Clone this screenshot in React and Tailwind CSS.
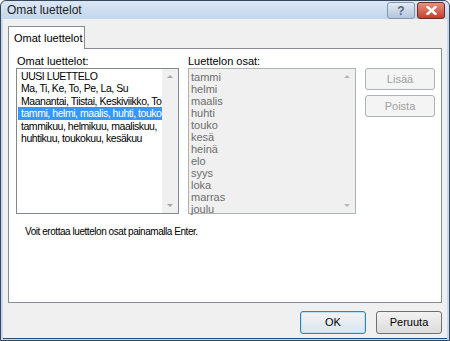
const lists = [
  "UUSI LUETTELO",
  "Ma, Ti, Ke, To, Pe, La, Su",
  "Maanantai, Tiistai, Keskiviikko, To",
  "tammi, helmi, maalis, huhti, touko",
  "tammikuu, helmikuu, maaliskuu,",
  "huhtikuu, toukokuu, kesäkuu",
];

const parts = ["tammi", "helmi", "maalis", "huhti", "touko", "kesä", "heinä", "elo", "syys", "loka", "marras", "joulu"];

function ScrollBar({ disabled }) {
  return (
    <div className="w-[16px] shrink-0 flex flex-col justify-between items-center py-[6px] bg-[#f0f0f0]">
      <span className={"w-0 h-0 border-x-[3px] border-x-transparent border-b-[3px] " + (disabled ? "border-b-[#b8b8b8]" : "border-b-[#a7a7a7]")} />
      <span className={"w-0 h-0 border-x-[3px] border-x-transparent border-t-[3px] " + (disabled ? "border-t-[#b8b8b8]" : "border-t-[#a7a7a7]")} />
    </div>
  );
}

export default function App() {
  return (
    <div
      className="w-[450px] h-[341px] flex flex-col bg-[#c6d9ef] border border-[#36475c] rounded-t-[6px] text-[11px] text-black"
      style={{ fontFamily: '"Liberation Sans", Arial, sans-serif' }}
    >
      {/* Title bar */}
      <div className="h-[21px] flex items-center justify-between pl-[6px] pr-[4px] bg-gradient-to-b from-[#dbe7f5] to-[#c3d6ed] rounded-t-[6px]">
        <span className="text-[12px] text-[#1e1e1e]">Omat luettelot</span>
        <div className="flex gap-[2px] mt-[1px]">
          <div className="w-[28px] h-[17px] flex items-center justify-center rounded-[3px] border border-[#8597ad] bg-gradient-to-b from-[#e3ebf5] to-[#b3c5dc] text-[12px] font-bold text-[#53667e]">
            ?
          </div>
          <div className="w-[28px] h-[17px] flex items-center justify-center rounded-[3px] border border-[#6e2a25] bg-gradient-to-b from-[#e5907e] to-[#c2402f]">
            <svg width="11" height="9" viewBox="0 0 11 9">
              <path d="M1.5 1 L9.5 8 M9.5 1 L1.5 8" stroke="#fff" strokeWidth="2.4" strokeLinecap="square" />
            </svg>
          </div>
        </div>
      </div>

      {/* Content */}
      <div className="flex-1 flex flex-col mx-[2px] mb-[3px] bg-[#f0f0f0] border-b border-[#1d4f7a] pl-[5px] pr-[5px] pt-[7px] pb-[4px]">
        {/* Tab */}
        <div className="flex">
          <div className="w-[77px] h-[23px] -mb-[1px] z-10 flex items-center pl-[5px] bg-white border border-[#898c95] border-b-0 text-[11px]">
            Omat luettelot
          </div>
        </div>

        {/* Tab panel */}
        <div className="h-[255px] bg-white border border-[#898c95] pl-[7px] pt-[5px] flex flex-col">
          <div className="flex gap-[9px]">
            <div className="flex flex-col w-[163px]">
              <span className="h-[14px] leading-[14px] pl-[1px]">Omat luettelot:</span>
              <div className="h-[146px] flex border border-[#828790] bg-white">
                <div className="flex-1 min-w-0 overflow-hidden pt-[1px] pl-[1px] text-[10.5px] tracking-[-0.45px]">
                  {lists.map((l, i) => (
                    <div
                      key={i}
                      className={"h-[12.4px] leading-[12.4px] pl-[3px] whitespace-nowrap " + (i === 3 ? "bg-[#3399ff] text-white" : "")}
                    >
                      {l}
                    </div>
                  ))}
                </div>
                <ScrollBar />
              </div>
            </div>

            <div className="flex flex-col w-[168px]">
              <span className="h-[14px] leading-[14px]">Luettelon osat:</span>
              <div className="h-[146px] flex border border-[#adb2b5] bg-[#f0f0f0]">
                <div className="flex-1 min-w-0 pt-[2px] pl-[2px] text-[#6d6d6d]">
                  {parts.map((p) => (
                    <div key={p} className="h-[12px] leading-[12px]">
                      {p}
                    </div>
                  ))}
                </div>
                <ScrollBar disabled />
              </div>
            </div>

            <div className="flex flex-col gap-[5px] pt-[14px]">
              <div className="w-[70px] h-[22px] flex items-center justify-center rounded-[3px] border border-[#adb2b5] bg-[#f4f4f4] text-[#a0a0a0]">
                Lisää
              </div>
              <div className="w-[70px] h-[22px] flex items-center justify-center rounded-[3px] border border-[#adb2b5] bg-[#f4f4f4] text-[#a0a0a0]">
                Poista
              </div>
            </div>
          </div>

          <p className="mt-[11px] pl-[9px] leading-[13px] text-[10px] tracking-[-0.45px]">Voit erottaa luettelon osat painamalla Enter.</p>
        </div>

        {/* Footer buttons */}
        <div className="flex justify-end gap-[10px] mt-[8px]">
          <div className="w-[66px] h-[23px] flex items-center justify-center rounded-[3px] border border-[#3c7fb1] bg-gradient-to-b from-[#f2f2f2] to-[#d9e6f1] shadow-[inset_0_0_0_1px_#b8e2f7]">
            OK
          </div>
          <div className="w-[66px] h-[23px] flex items-center justify-center rounded-[3px] border border-[#707070] bg-gradient-to-b from-[#f2f2f2] to-[#dcdcdc]">
            Peruuta
          </div>
        </div>
      </div>
    </div>
  );
}
